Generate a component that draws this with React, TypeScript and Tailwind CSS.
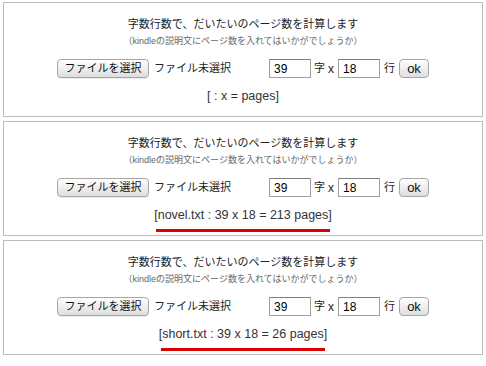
import React from "react";

const JP = "font-['Liberation_Sans','Noto_Sans_CJK_JP',sans-serif]";

type Result = { file?: string; pages?: number };

function Panel({ file, pages }: Result) {
  const text = file ? `[${file} : 39 x 18 = ${pages} pages]` : "[ : x = pages]";
  return (
    <div className="h-[115px] mx-[3px] border border-[#bcbcbc] bg-white flex flex-col items-center pt-[13px]">
      <div className="text-[11px] leading-[16px] text-[#222]">字数行数で、だいたいのページ数を計算します</div>
      <div className="text-[9px] leading-[12px] text-[#666] mt-[3px]">（kindleの説明文にページ数を入れてはいかがでしょうか）</div>
      <div className="flex items-center mt-[12px] h-[19px] text-[11px] text-[#222]">
        <button className="h-[19px] w-[92px] rounded-[4px] border border-[#a6a6a6] bg-gradient-to-b from-white to-[#dedede] text-[11px] leading-none text-[#111] shadow-[0_1px_0_rgba(0,0,0,0.08)]">
          ファイルを選択
        </button>
        <span className="ml-[5px] w-[115px]">ファイル未選択</span>
        <input
          readOnly
          value="39"
          className="w-[42px] h-[19px] border border-[#a0a0a0] border-t-[#7f7f7f] px-[4px] text-[12px] text-black outline-none"
        />
        <span className="ml-[3px]">字</span>
        <span className="ml-[3px] mr-[4px] text-[12px]">x</span>
        <input
          readOnly
          value="18"
          className="w-[42px] h-[19px] border border-[#a0a0a0] border-t-[#7f7f7f] px-[4px] text-[12px] text-black outline-none"
        />
        <span className="ml-[4px]">行</span>
        <button className="ml-[4px] h-[19px] w-[30px] rounded-[4px] border border-[#a6a6a6] bg-gradient-to-b from-white to-[#dedede] text-[13px] leading-none text-[#111]">
          ok
        </button>
      </div>
      <div className="mt-[10px] flex flex-col">
        <span className="text-[12.5px] leading-[17px] text-[#333]">{text}</span>
        {file && <div className="mt-[5px] mx-[2px] h-[3px] bg-[#d90000]" />}
      </div>
    </div>
  );
}

export default function App() {
  return (
    <div className={`w-[486px] h-[366px] bg-white pt-[2px] flex flex-col gap-[4px] ${JP}`}>
      <Panel />
      <Panel file="novel.txt" pages={213} />
      <Panel file="short.txt" pages={26} />
    </div>
  );
}
